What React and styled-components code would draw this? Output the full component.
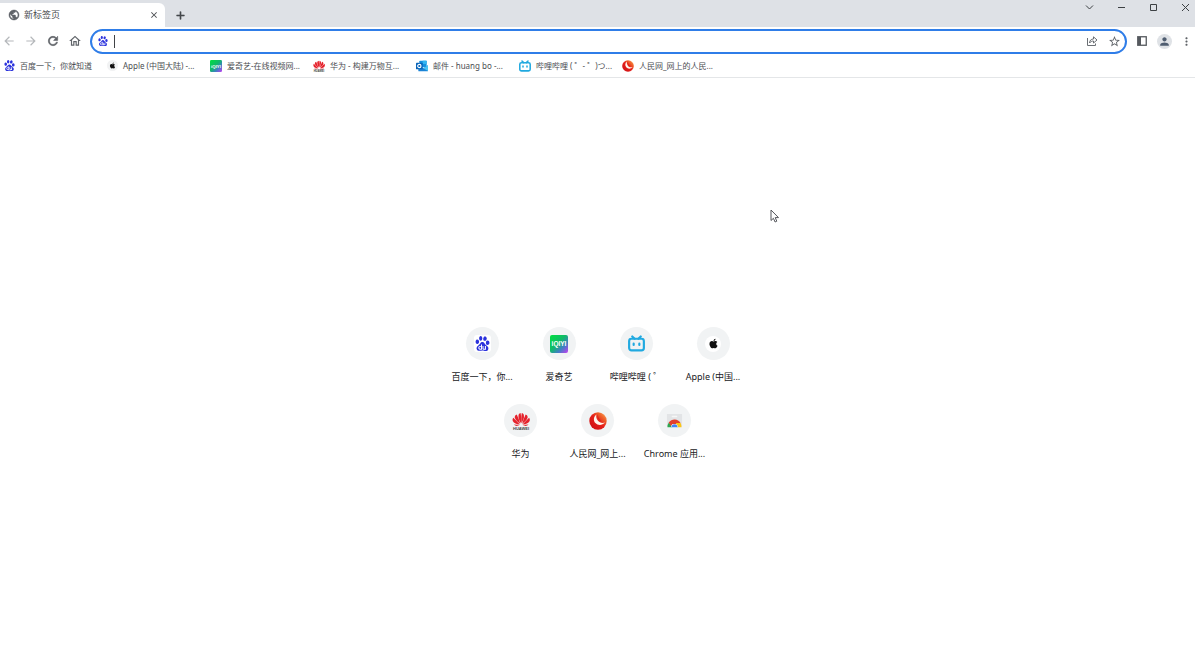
import React from "react";
import styled, { createGlobalStyle } from "styled-components";
import {
  MdPublic, MdClose, MdAdd, MdArrowBack, MdArrowForward, MdRefresh,
  MdOutlineHome, MdStarBorder, MdPerson, MdMoreVert,
} from "react-icons/md";
import { SiBaidu } from "react-icons/si";
import { FaApple } from "react-icons/fa";

const GlobalStyle = createGlobalStyle`
  * { box-sizing: border-box; }
  body {
    margin: 0;
    background: #fff;
    color: #3c4043;
    font-family: "Noto Sans", "Noto Sans CJK SC", sans-serif;
    font-size: 9px;
    line-height: 12px;
  }
  button, input { font: inherit; color: inherit; }
  a { color: inherit; text-decoration: none; }
  svg { display: block; flex: none; }
`;

const Browser = styled.div`
  display: flex;
  flex-direction: column;
  min-height: 100vh;
`;

const TabStrip = styled.header`
  display: flex;
  align-items: flex-end;
  height: 27px;
  overflow: hidden;
  background: #dee1e6;
`;

const Tab = styled.div`
  display: flex;
  align-items: center;
  gap: 4px;
  width: 165px;
  height: 24px;
  padding: 0 6px 0 8px;
  border-radius: 0 6px 0 0;
  background: #fff;
  color: #5f6368;
`;

const TabTitle = styled.span`
  flex: 1;
  color: #45484c;
  white-space: nowrap;
`;

const IconButton = styled.button`
  display: flex;
  align-items: center;
  justify-content: center;
  flex: none;
  width: ${(p) => p.$size || 22}px;
  height: ${(p) => p.$size || 22}px;
  padding: 0;
  border: 0;
  border-radius: 50%;
  background: none;
  color: ${(p) => p.$color || "#5f6368"};
`;

const NewTab = styled.div`
  padding: 0 0 1px 4px;
`;

const WindowControls = styled.div`
  display: flex;
  align-self: flex-start;
  margin-left: auto;
`;

const CaptionButton = styled.button`
  display: flex;
  align-items: center;
  justify-content: center;
  width: 32px;
  height: 15px;
  padding: 0;
  border: 0;
  background: none;
  color: #3c4043;
  &:last-child { margin-right: -6px; }
`;

const Toolbar = styled.nav`
  display: flex;
  align-items: center;
  height: 28px;
  overflow: hidden;
`;

const NavButtons = styled.div`
  display: flex;
  width: 90px;
  margin-left: -2px;
  margin-right: 2px;
`;

const AddressBar = styled.div`
  display: flex;
  align-items: center;
  flex: 1;
  height: 25px;
  padding: 0 0 0 6px;
  border: 2px solid #2f7de8;
  border-radius: 13px;
  background: #fff;
`;

const Caret = styled.span`
  width: 1px;
  height: 13px;
  margin-left: 6px;
  background: #404346;
`;

const AddressInput = styled.input`
  flex: 1;
  min-width: 0;
  padding: 0 2px;
  border: 0;
  outline: 0;
  background: none;
  caret-color: transparent;
`;

const ToolbarActions = styled.div`
  display: flex;
  align-items: center;
  padding-left: 4px;
  margin-right: -2px;
`;

const BookmarksBar = styled.nav`
  display: flex;
  align-items: center;
  height: 23px;
  padding: 0 4px 1px;
  border-bottom: 1px solid #e4e6e8;
`;

const Bookmark = styled.a`
  display: flex;
  align-items: center;
  gap: 5px;
  width: 103px;
  color: #4b4e52;
  font-size: 8px;
  white-space: nowrap;
`;

const RoundBadge = styled.span`
  display: flex;
  align-items: center;
  justify-content: center;
  width: ${(p) => p.$size}px;
  height: ${(p) => p.$size}px;
  border-radius: 50%;
  background: ${(p) => p.$background};
  color: #111;
`;

const Page = styled.main`
  display: flex;
  justify-content: center;
  padding-top: 249px;
`;

const Shortcuts = styled.div`
  display: flex;
  flex-wrap: wrap;
  justify-content: center;
  width: 308px;
`;

const Shortcut = styled.a`
  display: flex;
  flex-direction: column;
  align-items: center;
  gap: 11px;
  width: 77px;
  height: 77px;
  color: #202124;
  white-space: nowrap;
`;

const ShortcutIcon = styled.span`
  display: flex;
  align-items: center;
  justify-content: center;
  width: 33px;
  height: 33px;
  border-radius: 50%;
  background: #f1f3f4;
`;

const Pointer = styled.svg`
  position: absolute;
  left: 770px;
  top: 209px;
`;

const BaiduIcon = ({ size }) => <SiBaidu size={size} color="#2b32dc" />;

const WhiteTile = styled.span`
  display: flex;
  padding: 1px;
  border-radius: 3px;
  background: #fff;
`;

function IqiyiIcon({ size }) {
  const id = `iqiyi-${size}`;
  return (
    <svg width={size} height={size} viewBox="0 0 18 18" aria-hidden="true">
      <defs>
        <linearGradient id={id} x1="0" y1="0" x2="1" y2="1">
          <stop offset="0" stopColor="#00e03f" />
          <stop offset=".45" stopColor="#10b969" />
          <stop offset=".7" stopColor="#3f7fc4" />
          <stop offset="1" stopColor="#c93cf4" />
        </linearGradient>
      </defs>
      <rect width="18" height="18" rx="2" fill={`url(#${id})`} />
      <text x="9" y="11.3" fontSize="6.5" fontWeight="700" fill="#fff" textAnchor="middle"
        fontFamily="Liberation Sans, sans-serif">iQIYI</text>
    </svg>
  );
}

function BilibiliIcon({ size }) {
  return (
    <svg width={size} height={size} viewBox="0 0 18 18" fill="none" stroke="#20a9e0"
      strokeWidth="2.3" strokeLinecap="round" strokeLinejoin="round" aria-hidden="true">
      <path d="M4.5 1.5 7 4M13.5 1.5 11 4" />
      <rect x="1.2" y="4" width="15.6" height="12.3" rx="2.5" />
      <path d="M6 9.2v1.4M12 9.2v1.4" />
    </svg>
  );
}

function HuaweiIcon({ size }) {
  const petals = [
    "M9 11.2C7.2 8.5 6 5.7 6.5 3.2 6.8 1.8 7.6 1.2 8.6 1 9.2 4 9.3 7.5 9 11.2Z",
    "M8.3 11.7C5.1 9.8 3 7.6 2.8 5.3 2.7 4 3.5 3 4.8 2.6 6.1 5.6 7.3 8.5 8.3 11.7Z",
    "M7.9 12.4C4.6 12.2 1.8 11.2.9 9.2.3 7.9.6 6.7 1.3 5.8 3.4 8.1 5.7 10.1 7.9 12.4Z",
    "M7.6 13.1C5.5 14.3 3.3 14.2 1.8 12.6 3.7 12.9 5.6 13 7.6 13.1Z",
  ];
  return (
    <svg width={size} height={size} viewBox="0 0 18 18" aria-hidden="true">
      <g fill="#e5222c">
        {petals.map((d) => <path key={d} d={d} />)}
        <g transform="matrix(-1 0 0 1 18.4 0)">
          {petals.map((d) => <path key={d} d={d} />)}
        </g>
      </g>
      <text x="9" y="17.8" fontSize="4" fontWeight="700" fill="#444" textAnchor="middle"
        fontFamily="Liberation Sans, sans-serif">HUAWEI</text>
    </svg>
  );
}

function PeopleIcon({ size }) {
  const id = `people-${size}`;
  return (
    <svg width={size} height={size} viewBox="0 0 18 18" aria-hidden="true">
      <defs>
        <linearGradient id={id} x1="0" y1="1" x2="1" y2="0">
          <stop offset="0" stopColor="#c90d12" />
          <stop offset=".5" stopColor="#e5201b" />
          <stop offset=".75" stopColor="#f0662c" />
          <stop offset="1" stopColor="#fcbd70" />
        </linearGradient>
      </defs>
      <circle cx="9" cy="9" r="8.7" fill={`url(#${id})`} />
      <path d="M7.4 2.4C4.4 4.6 4.2 8.6 6.4 11 8.8 13.7 13.2 13.7 16 10.6 13.2 11.5 10.5 10.7 8.8 8.5 7.3 6.6 6.9 4.3 7.4 2.4Z" fill="#fff6ed" />
      <path d="M8.8 2.2C7.6 4.5 9.2 8.6 12.6 9.2 9.8 7.1 8.7 4.5 8.8 2.2Z" fill="#d9201c" />
    </svg>
  );
}

function OutlookIcon({ size }) {
  return (
    <svg width={size} height={size} viewBox="0 0 18 18" aria-hidden="true">
      <rect x="5" y="1" width="11" height="10" rx="1" fill="#1490df" />
      <path d="M10 1h6v5h-6z" fill="#32b5f1" />
      <path d="M3.5 8 11 12.5 18 8v8a1 1 0 0 1-1 1H4.5a1 1 0 0 1-1-1Z" fill="#1a83d6" />
      <path d="m11 12.5 7-4.5v8.5Z" fill="#49c4f3" />
      <rect y="4" width="10" height="10" rx="1" fill="#0863b8" />
      <circle cx="5" cy="9" r="2.5" fill="none" stroke="#fff" strokeWidth="1.7" />
    </svg>
  );
}

function WebStoreIcon() {
  return (
    <svg width="17" height="17" viewBox="0 0 18 18" aria-hidden="true">
      <path d="M1 2h16v13a1 1 0 0 1-1 1H2a1 1 0 0 1-1-1Z" fill="#e2e4e6" />
      <rect x="6" y="4" width="6" height="1.5" rx=".7" fill="#f6f6f6" />
      <path d="M1.6 16.2a7.4 7.4 0 0 1 1.6-5.4L6.5 16.2Z" fill="#2da64f" />
      <path d="M2.9 11.2A7.4 7.4 0 0 1 15.4 11.6L12 13H6.5L5.4 15.4Z" fill="#e3402e" />
      <path d="M15.4 11.6a7.4 7.4 0 0 1 1 4.6H11.5l-1-4.6Z" fill="#fbc516" />
      <path d="M5.4 16.2a3.6 3.6 0 0 1 7.2 0Z" fill="#fff" />
      <path d="M5.8 16.2a3.2 3.2 0 0 1 6.4 0Z" fill="#4285f4" />
    </svg>
  );
}

const ShareIcon = () => (
  <svg width="12" height="12" viewBox="0 0 12 12" fill="none" stroke="#6b6f74" aria-hidden="true">
    <path d="M1.5 3v7.5h8V8.5" />
    <path d="M3.5 8C3.8 5.3 5 4 7.5 4V1.8L11 5 7.5 8V6C5.7 6 4.6 6.7 3.5 8Z" strokeLinejoin="round" />
  </svg>
);

const SidePanelIcon = () => (
  <svg width="10" height="10" viewBox="0 0 10 10" aria-hidden="true">
    <rect x=".75" y=".75" width="8.5" height="8.5" fill="none" stroke="#55595e" strokeWidth="1.3" />
    <path d="M1 1h3v8H1z" fill="#55595e" />
  </svg>
);

const Bold = styled.span`
  display: flex;
  path:not([fill="none"]) { stroke: currentColor; stroke-width: 1px; }
`;

const captions = [
  ["Search tabs", "M1 2.5 4.5 6 8 2.5"],
  ["Minimize", "M1 4.5h7"],
  ["Maximize", "M1.5 1.5h6v6h-6z"],
  ["Close", "M1 1l7 7M8 1 1 8"],
];

const bookmarks = [
  ["百度一下，你就知道", <BaiduIcon size={11} />],
  ["Apple (中国大陆) -...", <RoundBadge $size={11} $background="#f1f2f3"><FaApple size={7} /></RoundBadge>],
  ["爱奇艺-在线视频网...", <IqiyiIcon size={12} />],
  ["华为 - 构建万物互...", <HuaweiIcon size={12} />],
  ["邮件 - huang bo -...", <OutlookIcon size={12} />],
  ["哔哩哔哩 ( ゜- ゜)つ...", <BilibiliIcon size={12} />],
  ["人民网_网上的人民...", <PeopleIcon size={12} />],
];

const shortcuts = [
  ["百度一下，你...", <WhiteTile><BaiduIcon size={15} /></WhiteTile>],
  ["爱奇艺", <IqiyiIcon size={18} />],
  ["哔哩哔哩 ( ゜", <BilibiliIcon size={17} />],
  ["Apple (中国...", <RoundBadge $size={16} $background="#fff"><FaApple size={11} /></RoundBadge>],
  ["华为", <HuaweiIcon size={18} />],
  ["人民网_网上...", <PeopleIcon size={18} />],
  ["Chrome 应用...", <WebStoreIcon />],
];

export default function App() {
  return (
    <Browser>
      <GlobalStyle />
      <TabStrip>
        <Tab>
          <Bold><MdPublic size={12} /></Bold>
          <TabTitle>新标签页</TabTitle>
          <IconButton $size={11} $color="#45484c" aria-label="Close tab"><MdClose size={10} /></IconButton>
        </Tab>
        <NewTab>
          <IconButton $color="#45484c" aria-label="New tab"><Bold><MdAdd size={13} /></Bold></IconButton>
        </NewTab>
        <WindowControls>
          {captions.map(([label, d]) => (
            <CaptionButton key={label} aria-label={label}>
              <svg width="9" height="9" viewBox="0 0 9 9" fill="none" stroke="currentColor"><path d={d} /></svg>
            </CaptionButton>
          ))}
        </WindowControls>
      </TabStrip>
      <Toolbar>
        <NavButtons>
          <IconButton $color="#b5b8bb" aria-label="Back"><MdArrowBack size={14} /></IconButton>
          <IconButton $color="#b5b8bb" aria-label="Forward"><MdArrowForward size={14} /></IconButton>
          <IconButton aria-label="Reload"><Bold><MdRefresh size={14} /></Bold></IconButton>
          <IconButton aria-label="Home"><MdOutlineHome size={14} /></IconButton>
        </NavButtons>
        <AddressBar>
          <BaiduIcon size={10} />
          <Caret />
          <AddressInput aria-label="Address" />
          <IconButton aria-label="Share"><ShareIcon /></IconButton>
          <IconButton aria-label="Bookmark this page"><MdStarBorder size={13} /></IconButton>
        </AddressBar>
        <ToolbarActions>
          <IconButton aria-label="Side panel"><SidePanelIcon /></IconButton>
          <IconButton aria-label="Profile">
            <RoundBadge $size={15} $background="#dfe2e6"><MdPerson size={13} color="#4f5d70" /></RoundBadge>
          </IconButton>
          <IconButton aria-label="Menu"><MdMoreVert size={13} /></IconButton>
        </ToolbarActions>
      </Toolbar>
      <BookmarksBar>
        {bookmarks.map(([label, icon]) => (
          <Bookmark key={label} href="#">{icon}<span>{label}</span></Bookmark>
        ))}
      </BookmarksBar>
      <Page>
        <Shortcuts>
          {shortcuts.map(([label, icon]) => (
            <Shortcut key={label} href="#">
              <ShortcutIcon>{icon}</ShortcutIcon>
              <span>{label}</span>
            </Shortcut>
          ))}
        </Shortcuts>
      </Page>
      <Pointer width="10" height="15" viewBox="0 0 10 15" aria-hidden="true">
        <path d="M1 1v10.5l2.4-2.2 1.7 3.7 1.7-.8-1.6-3.6h3.3Z" fill="#fff" stroke="#55575c" />
      </Pointer>
    </Browser>
  );
}
